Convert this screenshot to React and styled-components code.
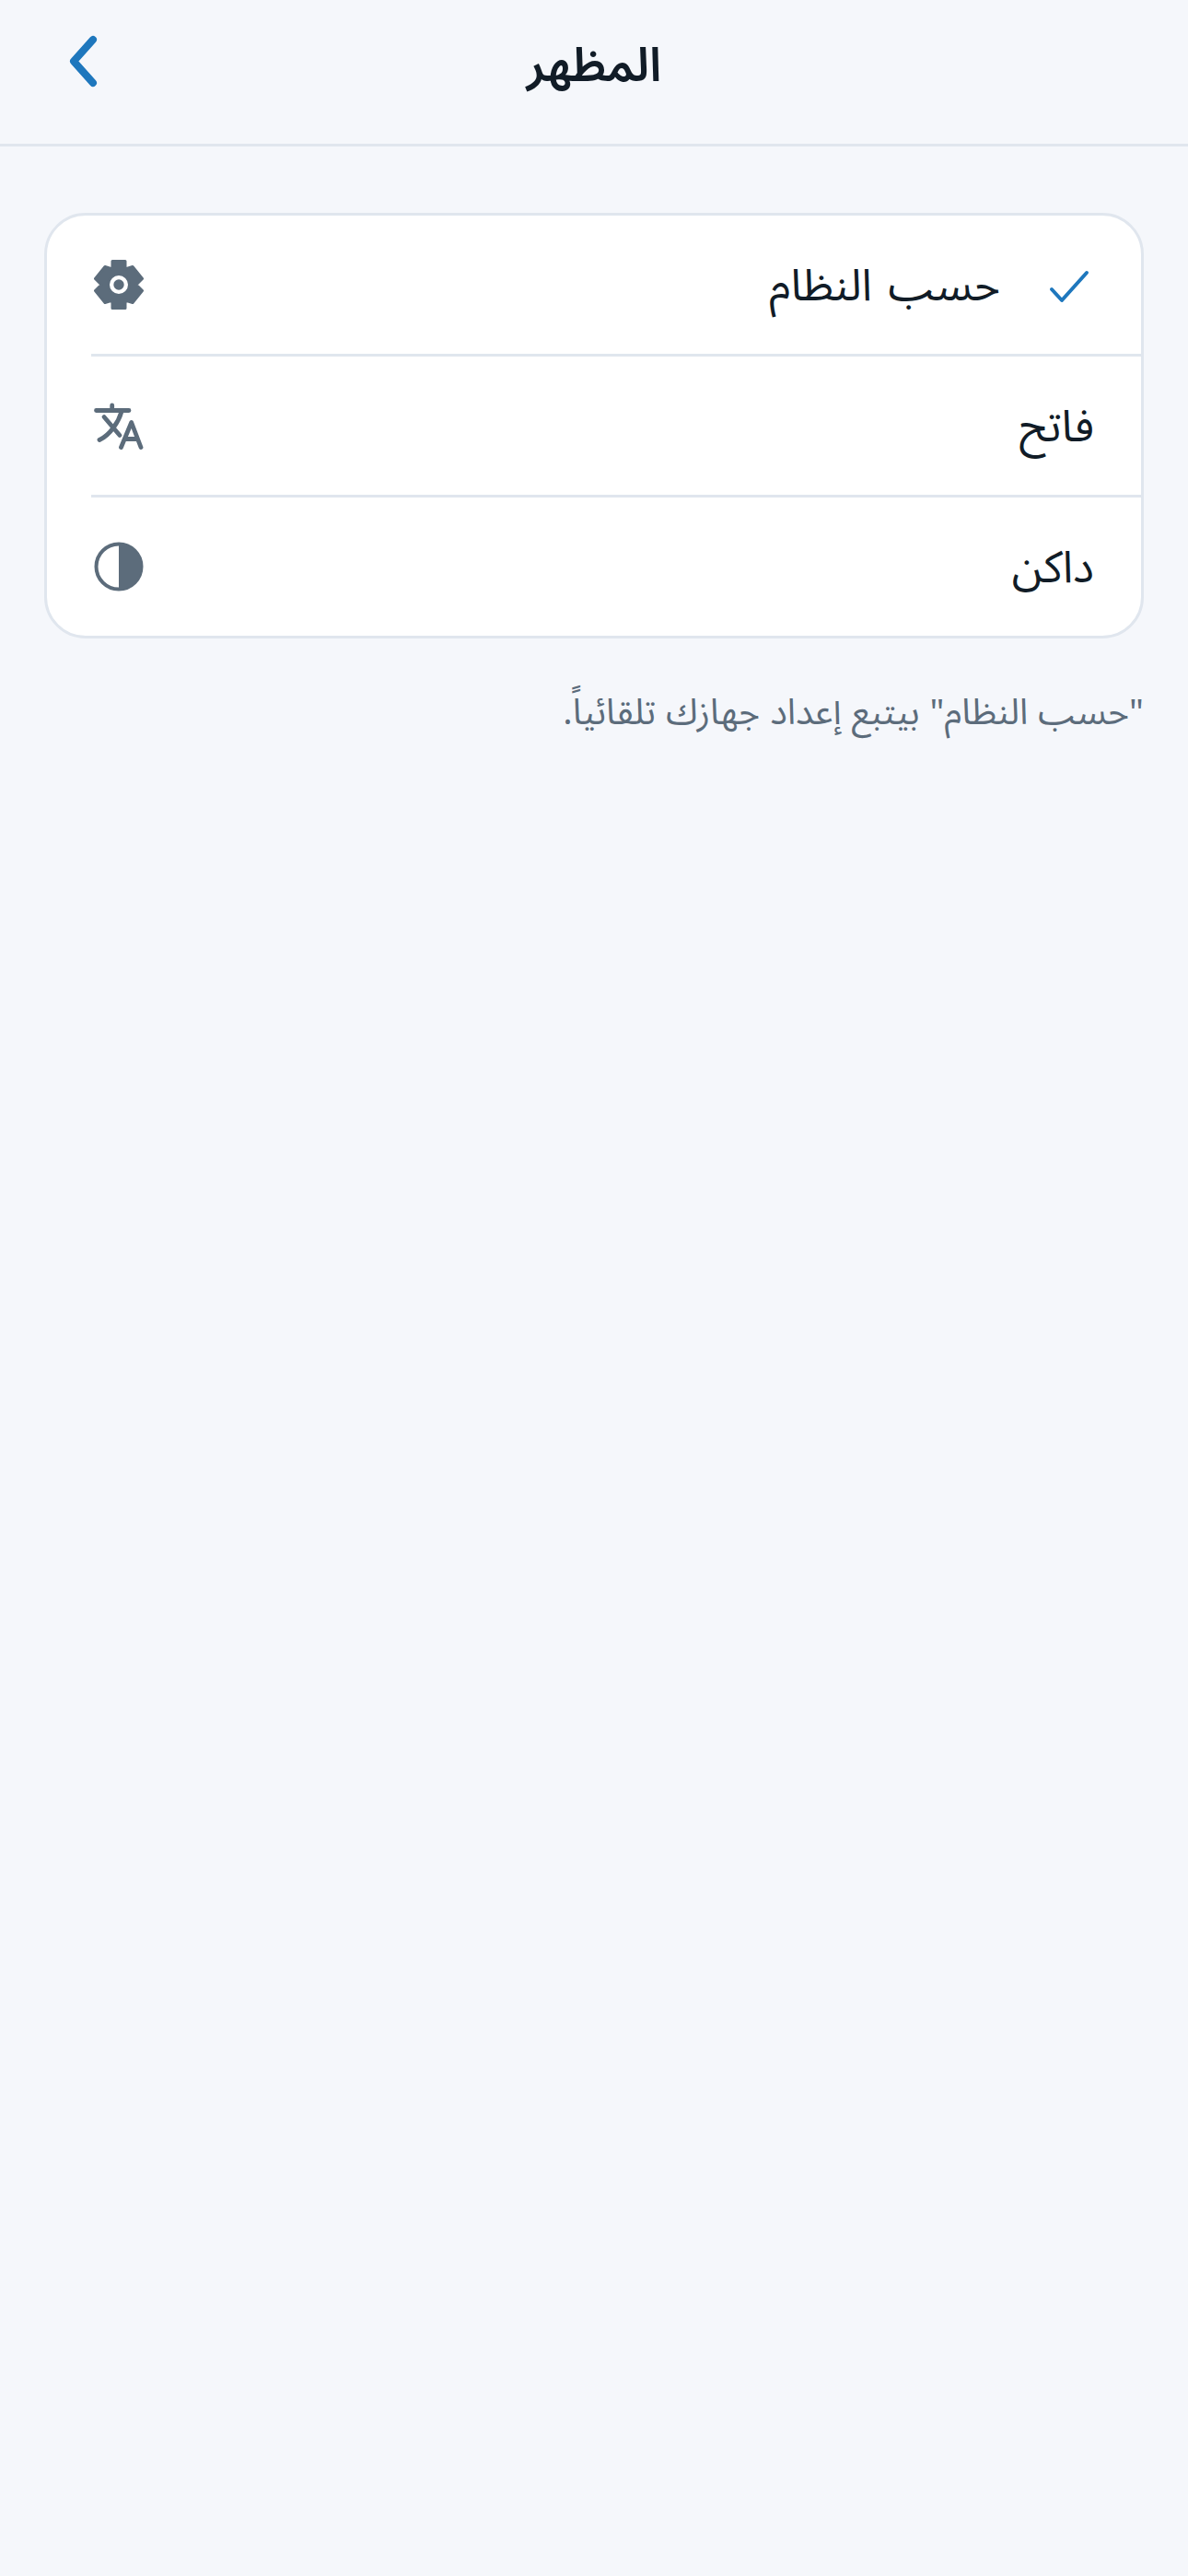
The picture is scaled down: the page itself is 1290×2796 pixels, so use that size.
import React from 'react'
import styled, { createGlobalStyle } from 'styled-components'

const Global = createGlobalStyle`
    html, body {
        margin: 0;
        padding: 0;
        background-color: #f5f7fb;
    }
`
const Page = styled.div`
    width: 1290px;
    height: 2796px;
    background-color: #f5f7fb;
    font-family: "Noto Sans Arabic", "Noto Sans", sans-serif;
    color: #111c27;
`
const Header = styled.header`
    position: relative;
    height: 156px;
    border-bottom: 3px solid #e0e6ee;
    display: flex;
    align-items: center;
    justify-content: center;
`
const Title = styled.h1`
    margin: 0 0 12px;
    font-size: 51px;
    font-weight: 600;
    line-height: 140px;
`
const BackButton = styled.button`
    position: absolute;
    left: 68px;
    top: 32px;
    width: 48px;
    height: 72px;
    padding: 0;
    border: 0;
    background: none;
`
const Content = styled.main`
    padding: 72px 48px 0;
`
const Card = styled.section`
    background-color: #fff;
    border: 3px solid #e0e6ee;
    border-radius: 45px;
    overflow: hidden;
`
const Row = styled.div`
    height: 150px;
    margin-left: 48px;
    padding: 0 51px 0 3px;
    display: flex;
    align-items: center;
    justify-content: space-between;
    border-bottom: ${p => (p.$last ? '0' : '3px solid #e0e6ee')};
`
const Label = styled.div`
    display: flex;
    align-items: center;
    gap: 48px;
    font-size: 48px;
    word-spacing: 5px;
`
const LabelText = styled.span`
    padding-top: 2px;
`
const Note = styled.p`
    margin: 51px 0 0;
    font-size: 39px;
    line-height: 60px;
    word-spacing: 1px;
    color: #5c6c7b;
`

const BackIcon = () => (
    <svg width="48" height="72" viewBox="0 0 48 72" fill="none" stroke="#1e77bd" strokeWidth="8" strokeLinecap="round" strokeLinejoin="round">
        <path d="M33 11 L12 34.5 L33 58" />
    </svg>
)
const CheckIcon = () => (
    <svg width="54" height="54" viewBox="0 0 54 54" fill="none" stroke="#1e77bd" strokeWidth="4" strokeLinecap="round" strokeLinejoin="round">
        <path d="M8 32 L19 44 L46 14" />
    </svg>
)
const GearIcon = () => (
    <svg width="54" height="54" viewBox="-27 -27 54 54">
        <path
            fill="#5c6c7b"
            fillRule="evenodd"
            stroke="#5c6c7b"
            strokeWidth="3"
            strokeLinejoin="round"
            d="M-7 -25.5 L7 -25.5 L7 -17 L15 -19.5 L25.5 -6.5 L19 0 L25.5 6.5 L15 19.5 L7 17 L7 25.5 L-7 25.5 L-7 17 L-15 19.5 L-25.5 6.5 L-19 0 L-25.5 -6.5 L-15 -19.5 L-7 -17 Z M0 -11.5 A11.5 11.5 0 1 0 0 11.5 A11.5 11.5 0 1 0 0 -11.5 Z"
        />
        <circle r="5.7" fill="#5c6c7b" />
    </svg>
)
const TranslateIcon = () => (
    <svg width="54" height="54" viewBox="0 0 54 54" fill="none" stroke="#5c6c7b" strokeWidth="4.8" strokeLinecap="round" strokeLinejoin="round">
        <path d="M2.5 10.5 H38 M19.7 5 V10.5 M11 17.5 L28 37.5 M29.7 12.5 C27 22 18 37 6 42.5" />
        <path d="M29.5 50.5 L40.7 23.5 L51 50.5 M34 41.5 H46" />
    </svg>
)
const ContrastIcon = () => (
    <svg width="54" height="54" viewBox="0 0 54 54">
        <circle cx="27" cy="27" r="24.5" fill="none" stroke="#5c6c7b" strokeWidth="4" />
        <path d="M27 2.5 A24.5 24.5 0 0 1 27 51.5 Z" fill="#5c6c7b" />
    </svg>
)

const options = [
    { id: 'system', label: 'حسب النظام', icon: <GearIcon />, selected: true },
    { id: 'light', label: 'فاتح', icon: <TranslateIcon /> },
    { id: 'dark', label: 'داكن', icon: <ContrastIcon /> },
]

export default function App() {
    return (
        <Page dir="rtl">
            <Global />
            <Header>
                <Title>المظهر</Title>
                <BackButton><BackIcon /></BackButton>
            </Header>
            <Content>
                <Card>
                    {options.map((item, i) => (
                        <Row key={item.id} $last={i === options.length - 1}>
                            <Label>
                                {item.selected && <CheckIcon />}
                                <LabelText>{item.label}</LabelText>
                            </Label>
                            {item.icon}
                        </Row>
                    ))}
                </Card>
                <Note>"حسب النظام" بيتبع إعداد جهازك تلقائياً.</Note>
            </Content>
        </Page>
    )
}
